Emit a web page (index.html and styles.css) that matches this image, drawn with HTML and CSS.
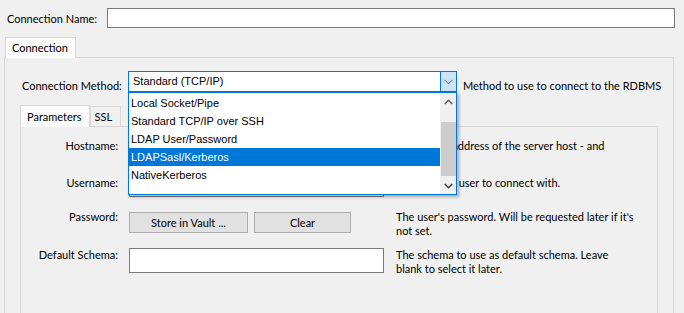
FILE: index.html
```html
<!DOCTYPE html>
<html lang="en">
<head>
    <meta charset="UTF-8">
    <title>Connection</title>
    <link rel="stylesheet" href="styles.css">
</head>
<body>

    <div class="name-row">
        <label class="name-label" for="conn-name">Connection Name:</label>
        <input id="conn-name" class="text-input name-input" type="text">
    </div>

    <div class="tab-strip outer-strip">
        <div class="tab tab-active">Connection</div>
    </div>

    <div class="tab-page outer-page">
        <div class="method-row">
            <span class="method-label">Connection Method:</span>
            <div class="combo">
                <span class="combo-value">Standard (TCP/IP)</span>
                <span class="combo-button">
                    <svg width="9" height="6" viewBox="0 0 9 6"><path d="M0.5 0.8 L4.5 4.8 L8.5 0.8" fill="none" stroke="#6d6d6d" stroke-width="1"/></svg>
                </span>
                <div class="combo-list">
                    <div class="combo-items">
                        <div class="combo-item">Local Socket/Pipe</div>
                        <div class="combo-item">Standard TCP/IP over SSH</div>
                        <div class="combo-item">LDAP User/Password</div>
                        <div class="combo-item combo-item-selected">LDAPSasl/Kerberos</div>
                        <div class="combo-item">NativeKerberos</div>
                    </div>
                    <div class="scrollbar">
                        <div class="scroll-arrow">
                            <svg width="9" height="6" viewBox="0 0 9 6"><path d="M0.8 5 L4.5 1.3 L8.2 5" fill="none" stroke="#606060" stroke-width="1.5"/></svg>
                        </div>
                        <div class="scroll-track"><div class="scroll-thumb"></div></div>
                        <div class="scroll-arrow">
                            <svg width="9" height="6" viewBox="0 0 9 6"><path d="M0.8 1 L4.5 4.7 L8.2 1" fill="none" stroke="#404040" stroke-width="1.6"/></svg>
                        </div>
                    </div>
                </div>
            </div>
            <span class="help method-help">Method to use to connect to the RDBMS</span>
        </div>

        <div class="tab-strip inner-strip">
            <div class="tab tab-active">Parameters</div>
            <div class="tab">SSL</div>
        </div>

        <div class="tab-page inner-page">
            <div class="form-grid">
                <span class="field-label">Hostname:</span>
                <input class="text-input" type="text" value="127.0.0.1">
                <span class="help">Name or IP address of the server host - and<br>TCP/IP port.</span>

                <span class="field-label">Username:</span>
                <input class="text-input" type="text" value="root">
                <span class="help">Name of the user to connect with.</span>

                <span class="field-label">Password:</span>
                <div class="button-row">
                    <button class="btn btn-vault">Store in Vault ...</button>
                    <button class="btn btn-clear">Clear</button>
                </div>
                <span class="help">The user's password. Will be requested later if it's<br>not set.</span>

                <span class="field-label">Default Schema:</span>
                <input class="text-input schema-input" type="text">
                <span class="help">The schema to use as default schema. Leave<br>blank to select it later.</span>
            </div>
        </div>
    </div>

</body>
</html>
```

FILE: styles.css
```css
 body {
     font-family: 'Lato', 'Open Sans', sans-serif;
     font-size: 11px;
     color: #000;
     margin: 0;
     padding: 0;
     height: 313px;
     overflow: hidden;
     background-color: #f0f0f0;
 }

 .name-row {
     display: flex;
     align-items: center;
     height: 20px;
     padding: 8px 9px 0 7px;
 }

 .name-label {
     flex: 0 0 100px;
     white-space: nowrap;
 }

 .text-input {
     box-sizing: border-box;
     height: 21px;
     border: 1px solid #7a7a7a;
     background-color: #fff;
     padding: 0 3px;
     margin: 0;
     font: inherit;
     color: transparent;
 }

 .name-input {
     flex: 1;
     height: 20px;
 }

 /* tabs */

 .tab-strip {
     display: flex;
     align-items: flex-end;
     height: 20px;
 }

 .outer-strip {
     margin-top: 9px;
     padding-left: 5px;
 }

 .tab {
     box-sizing: border-box;
     height: 20px;
     padding: 2px 5px 0 4px;
     border: 1px solid #d9d9d9;
     border-bottom: none;
     background-color: #f0f0f0;
     line-height: 16px;
     white-space: nowrap;
 }

 .tab-active {
     height: 21px;
     margin-bottom: -1px;
     padding: 2px 7px 0 6px;
     background-color: #fbfbfb;
     position: relative;
     z-index: 1;
 }

 .tab-page {
     box-sizing: border-box;
     border: 1px solid #d9d9d9;
     border-bottom: none;
     background-color: #f0f0f0;
 }

 .outer-page {
     margin: 0 10px 0 4px;
     height: 256px;
     padding: 13px 15px 0 15px;
 }

 /* connection method */

 .method-row {
     display: flex;
     align-items: flex-start;
     height: 21px;
     padding-left: 2px;
     position: relative;
     z-index: 5;
 }

 .method-label {
     flex: 0 0 106px;
     min-width: 0;
     margin-top: 8px;
     line-height: 14px;
     white-space: nowrap;
 }

 .combo {
     position: relative;
     flex: 0 0 auto;
     box-sizing: border-box;
     width: 329px;
     height: 21px;
     border: 1px solid #0078d7;
     background-color: #fff;
     display: flex;
 }

 .combo-value {
     flex: 1;
     padding-left: 4px;
     font-family: 'Liberation Sans', Arial, sans-serif;
     font-size: 11px;
     line-height: 19px;
 }

 .combo-button {
     width: 15px;
     border-left: 1px solid #0078d7;
     background-color: #cce4f7;
     display: flex;
     align-items: center;
     justify-content: center;
 }

 .combo-list {
     position: absolute;
     top: 20px;
     left: -1px;
     box-sizing: border-box;
     width: 329px;
     height: 103px;
     border: 1px solid #0078d7;
     background-color: #fff;
     display: flex;
     padding: 1px 0 0 0;
     box-shadow: 2px 2px 3px rgba(0, 0, 0, 0.3);
 }

 .combo-items {
     flex: 1;
 }

 .combo-item {
     height: 18px;
     line-height: 18px;
     padding-left: 2px;
     font-family: 'Liberation Sans', Arial, sans-serif;
     font-size: 11px;
     white-space: nowrap;
 }

 .combo-item-selected {
     background-color: #0078d7;
     color: #fff;
 }

 .scrollbar {
     width: 16px;
     margin-top: -1px;
     background-color: #f0f0f0;
     display: flex;
     flex-direction: column;
 }

 .scroll-arrow {
     height: 17px;
     display: flex;
     align-items: center;
     justify-content: center;
 }

 .scroll-track {
     flex: 1;
     padding-top: 12px;
 }

 .scroll-thumb {
     height: 54px;
     margin-left: 1px;
     background-color: #cdcdcd;
 }

 .help {
     line-height: 14px;
     white-space: nowrap;
 }

 .method-help {
     margin: 8px 0 0 6px;
 }

 /* parameters */

 .inner-strip {
     margin: 13px 0 0 0;
     height: 21px;
 }

 .inner-strip .tab {
     height: 20px;
     padding: 2px 8px 0 4px;
 }

 .inner-strip .tab-active {
     height: 22px;
     padding: 3px 7px 0 6px;
 }

 .inner-page {
     height: 187px;
     padding-top: 12px;
 }

 .form-grid {
     display: grid;
     grid-template-columns: 97px 255px 1fr;
     grid-template-rows: 37px 34px 38px auto;
     column-gap: 11px;
 }

 .field-label {
     text-align: right;
     line-height: 14px;
     white-space: nowrap;
 }

 .form-grid .help {
     margin-left: 1px;
 }

 .schema-input {
     height: 25px;
 }

 .button-row {
     display: flex;
     gap: 6px;
     padding-top: 2px;
 }

 .btn {
     box-sizing: border-box;
     height: 21px;
     border: 1px solid #adadad;
     background-color: #e1e1e1;
     font: inherit;
     padding: 0;
     line-height: 18px;
 }

 .btn-vault {
     width: 119px;
 }

 .btn-clear {
     width: 97px;
 }
```
